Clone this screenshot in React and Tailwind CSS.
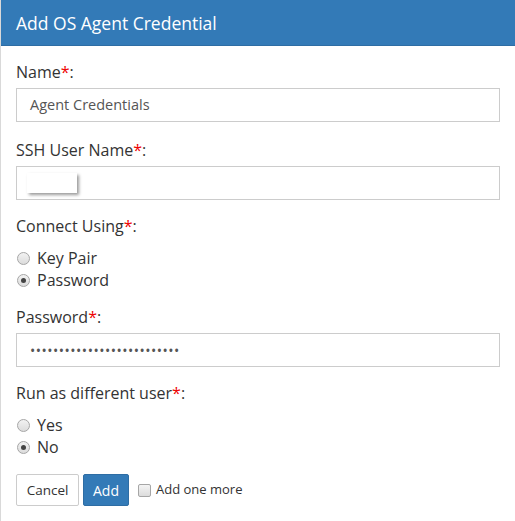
import React from "react";

const font = { fontFamily: '"Open Sans", "Noto Sans", sans-serif' };

function Label({ children, className = "" }) {
  return (
    <div className={"h-[22px] leading-[22px] text-[16px] text-[#333] " + className}>
      {children}
      <span className="text-[#e00]">*</span>:
    </div>
  );
}

function Radio({ checked, label, className = "" }) {
  return (
    <div className={"flex items-center h-[22px] " + className}>
      <span className="relative w-[13px] h-[13px] ml-[1px] rounded-full border border-[#a6a6a6] bg-gradient-to-b from-[#f2f2f2] to-[#dcdcdc] flex items-center justify-center">
        {checked && <span className="w-[5px] h-[5px] rounded-full bg-[#444]" />}
      </span>
      <span className="ml-[7px] text-[16px] leading-[22px] text-[#333]">{label}</span>
    </div>
  );
}

export default function App() {
  return (
    <div style={font} className="w-[515px] h-[521px] bg-white border-l border-[#d9d9d9] overflow-hidden">
      <div className="h-[46px] bg-[#337ab7] border-b border-[#2e6da4] flex items-center pl-[15px] pt-[1px] text-white text-[17.5px]">
        Add OS Agent Credential
      </div>
      <div className="pl-[15px] pr-[15px] pt-[15px]">
        <Label>Name</Label>
        <div className="mt-[5px] h-[34px] border border-[#ccc] flex items-center pl-[13px] text-[14.5px] text-[#555]">
          Agent Credentials
        </div>
        <Label className="mt-[17px]">SSH User Name</Label>
        <div className="mt-[5px] h-[34px] border border-[#ccc] flex items-center pl-[10px]">
          <div className="w-[50px] h-[20px] bg-white shadow-[2px_2px_3px_rgba(0,0,0,0.4)]" />
        </div>
        <Label className="mt-[15px]">Connect Using</Label>
        <Radio className="mt-[10px]" label="Key Pair" />
        <Radio label="Password" checked />
        <Label className="mt-[15px]">Password</Label>
        <div className="mt-[5px] h-[34px] border border-[#ccc] flex items-center pl-[13px] text-[14px] text-[#555] tracking-[0.5px]">
          ••••••••••••••••••••••••••
        </div>
        <Label className="mt-[15px]">Run as different user</Label>
        <Radio className="mt-[10px]" label="Yes" />
        <Radio label="No" checked />
        <div className="mt-[16px] flex items-center">
          <button className="h-[32px] w-[63px] border border-[#ccc] bg-white text-[13.5px] text-[#333] rounded-[2px]">
            Cancel
          </button>
          <button className="ml-[4px] h-[32px] w-[46px] border border-[#2e6da4] bg-[#337ab7] text-[14px] text-white rounded-[2px]">
            Add
          </button>
          <span className="ml-[9px] w-[13px] h-[13px] rounded-[2px] border border-[#a6a6a6] bg-gradient-to-b from-[#f4f4f4] to-[#dcdcdc]" />
          <span className="ml-[5px] text-[13px] text-[#333]">Add one more</span>
        </div>
      </div>
    </div>
  );
}
